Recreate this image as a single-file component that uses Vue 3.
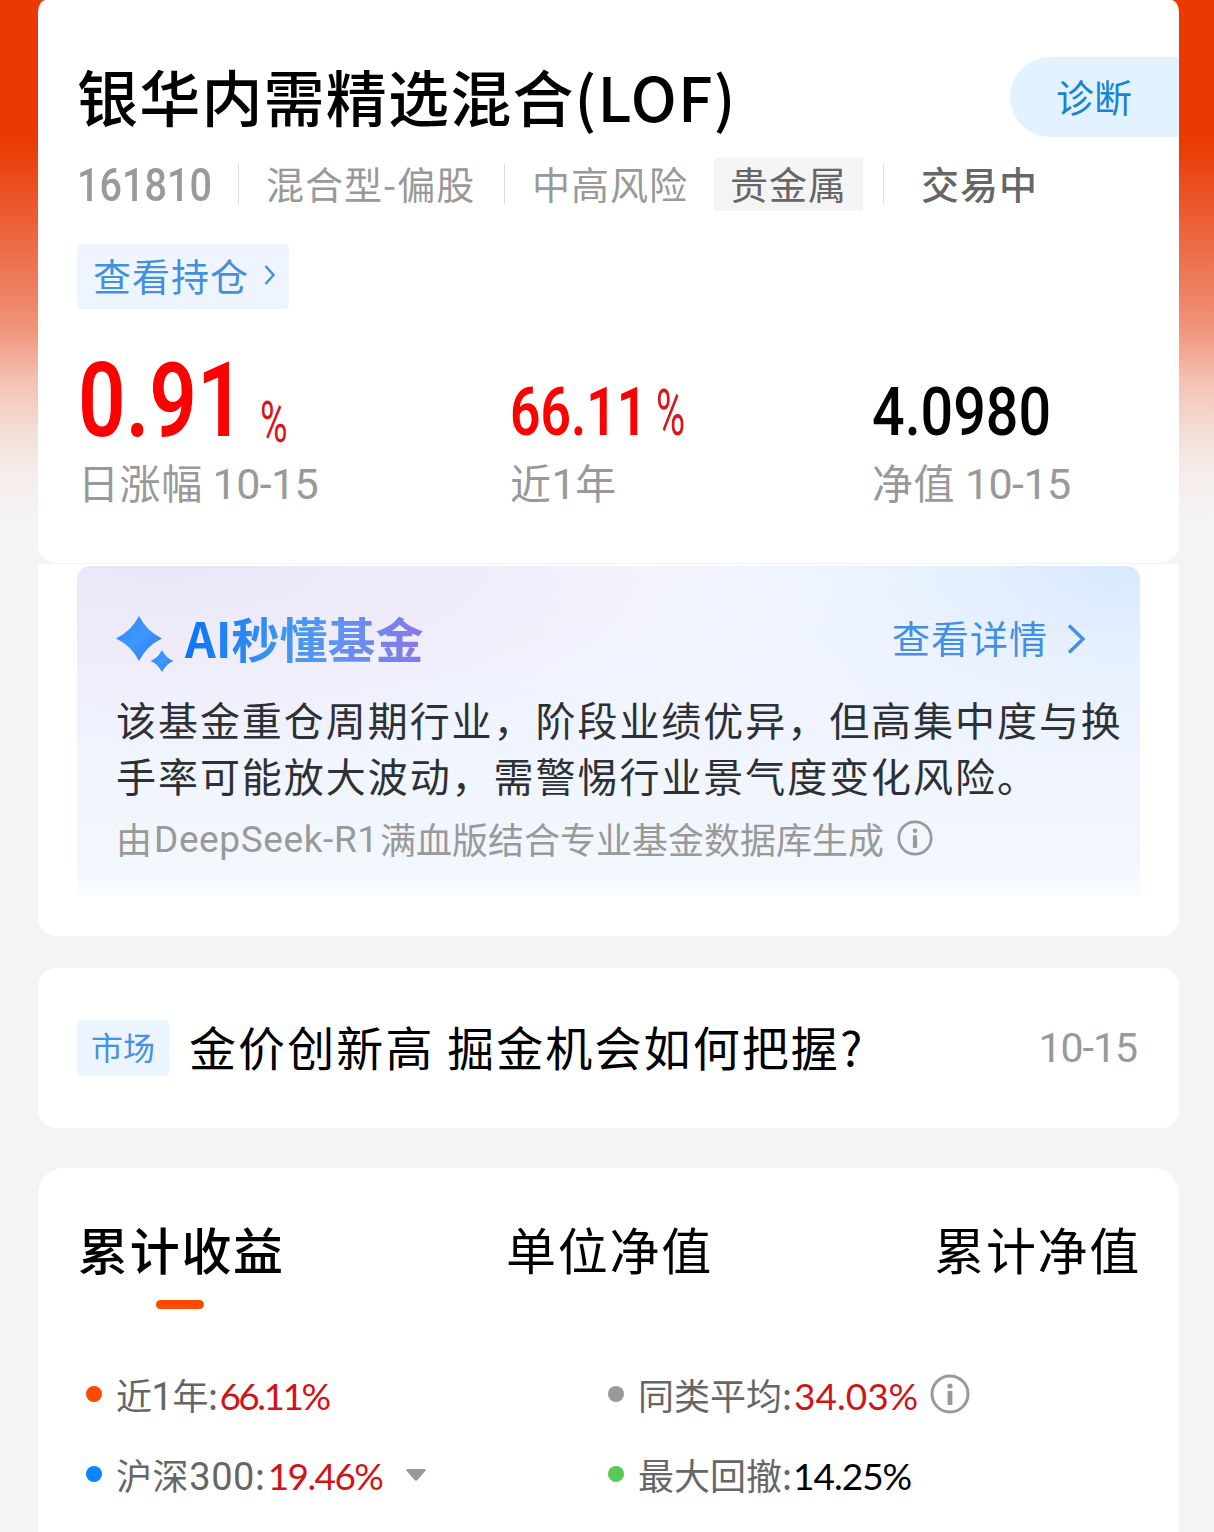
<template>
  <div class="fund-page">
    <section class="card summary">
      <div class="title-row">
        <h1>{{ fund.name }}</h1>
        <a class="diagnose">诊断</a>
      </div>

      <div class="meta-row">
        <span class="code">{{ fund.code }}</span>
        <span class="divider"></span>
        <span class="fund-type">{{ fund.type }}</span>
        <span class="divider"></span>
        <span class="risk">{{ fund.risk }}</span>
        <span class="sector">{{ fund.sector }}</span>
        <span class="divider"></span>
        <span class="status">{{ fund.status }}</span>
      </div>

      <a class="holdings">
        查看持仓
        <svg width="12" height="22" viewBox="0 0 12 22" fill="none">
          <path d="M1.5 2 L9.5 11 L1.5 20" stroke="currentColor" stroke-width="2.4" />
        </svg>
      </a>

      <div class="stats">
        <div class="stat stat-day">
          <div class="stat-value red"><b>0.91</b><i>%</i></div>
          <div class="stat-label">日涨幅 <span class="num">10-15</span></div>
        </div>
        <div class="stat stat-year">
          <div class="stat-value red"><b>66.11</b><i>%</i></div>
          <div class="stat-label">近<span class="num">1</span>年</div>
        </div>
        <div class="stat stat-net">
          <div class="stat-value"><b>4.0980</b></div>
          <div class="stat-label">净值 <span class="num">10-15</span></div>
        </div>
      </div>
    </section>

    <section class="card ai-card">
      <div class="ai-box">
        <div class="ai-head">
          <svg class="stars" width="58" height="56" viewBox="0 0 58 56">
            <defs>
              <linearGradient id="star" x1="0" y1="0" x2="1" y2="1">
                <stop offset="0" stop-color="#2f86ff" />
                <stop offset="0.5" stop-color="#3f97fc" />
                <stop offset="1" stop-color="#2b78f8" />
              </linearGradient>
            </defs>
            <path fill="url(#star)" d="M23 0 Q31 15.500 46 22.500 Q31 29.500 23 45 Q15 29.500 0 22.500 Q15 15.500 23 0Z" />
            <path fill="url(#star)" d="M46 34 Q50 42 57.500 45 Q50 48 46 56 Q42 48 34.500 45 Q42 42 46 34Z" />
          </svg>
          <span class="ai-title">AI秒懂基金</span>
          <a class="ai-more">
            <span>查看详情</span>
            <svg width="20" height="32" viewBox="0 0 20 32" fill="none">
              <path d="M2 2.5 L16 16 L2 29.5" stroke="currentColor" stroke-width="3.4" />
            </svg>
          </a>
        </div>
        <p class="ai-text">
          <span v-for="line in aiLines" :key="line">{{ line }}</span>
        </p>
        <div class="ai-source">
          <span>由</span><span class="model">DeepSeek-R1</span><span>满血版结合专业基金数据库生成</span>
          <svg class="info" width="36" height="36" viewBox="0 0 40 40" fill="none">
            <circle cx="20" cy="20" r="18" stroke="#999" stroke-width="3" />
            <circle cx="20" cy="12" r="2.5" fill="#999" />
            <rect x="17.7" y="17" width="4.6" height="14" fill="#999" />
          </svg>
        </div>
      </div>
    </section>

    <section class="card news">
      <span class="news-tag">市场</span>
      <span class="news-title">金价创新高 掘金机会如何把握?</span>
      <span class="news-date">10-15</span>
    </section>

    <section class="card chart">
      <nav class="tabs">
        <a
          v-for="(tab, index) in tabs"
          :key="tab"
          :class="{ active: index === activeTab }"
          @click="activeTab = index"
        >{{ tab }}</a>
      </nav>
      <div class="legend">
        <div v-for="item in legend" :key="item.label" class="legend-item" :class="item.key">
          <span class="dot"></span>
          <span class="legend-label">{{ item.label }}<span v-if="item.number" class="label-num">{{ item.number }}</span>{{ item.unit }}:</span>
          <span class="legend-value" :class="{ up: item.up }">{{ item.value }}</span>
          <svg v-if="item.info" class="legend-info" width="40" height="40" viewBox="0 0 40 40" fill="none">
            <circle cx="20" cy="20" r="18" stroke="#999" stroke-width="3" />
            <circle cx="20" cy="12" r="2.6" fill="#999" />
            <rect x="17.6" y="17" width="4.8" height="14" fill="#999" />
          </svg>
          <svg v-if="item.select" class="caret" width="20" height="12" viewBox="0 0 20 12">
            <path d="M1 0 H19 Q20.5 0.5 19.3 2 L11.5 11 Q10 12.5 8.5 11 L0.7 2 Q-0.5 0.5 1 0Z" fill="#999" />
          </svg>
        </div>
      </div>
    </section>
  </div>
</template>

<script setup>
import { ref } from 'vue'

const fund = {
  name: '银华内需精选混合(LOF)',
  code: '161810',
  type: '混合型-偏股',
  risk: '中高风险',
  sector: '贵金属',
  status: '交易中'
}

const aiLines = [
  '该基金重仓周期行业，阶段业绩优异，但高集中度与换',
  '手率可能放大波动，需警惕行业景气度变化风险。'
]

const tabs = ['累计收益', '单位净值', '累计净值']
const activeTab = ref(0)

const legend = [
  { key: 'year', label: '近', number: '1', unit: '年', value: '66.11%', up: true },
  { key: 'average', label: '同类平均', value: '34.03%', up: true, info: true },
  { key: 'hs300', label: '沪深', number: '300', value: '19.46%', up: true, select: true },
  { key: 'drawdown', label: '最大回撤', value: '14.25%' }
]
</script>

<style>
body {
  margin: 0;
  background: #f4f4f4;
}
</style>

<style scoped>
.fund-page {
  box-sizing: border-box;
  width: 1214px;
  height: 1532px;
  padding: 0 35px 0 38px;
  overflow: hidden;
  background: linear-gradient(
    to bottom,
    #ea3a02 0,
    #ea3a02 140px,
    #eb5529 200px,
    #ee8468 300px,
    #f0947a 328px,
    #f3c1b2 380px,
    #f3ddd6 430px,
    #f4ecea 470px,
    #f4f4f4 520px
  );
  font-family: "Noto Sans CJK SC", sans-serif;
  color: #000;
  white-space: nowrap;
}

.card {
  box-sizing: border-box;
  background: #fff;
}

.summary {
  height: 563px;
  padding: 57px 0 0 39px;
  border-radius: 8px 8px 20px 20px / 12px 12px 18px 18px;
}

.title-row {
  display: flex;
  justify-content: space-between;
  height: 80px;
  line-height: 77px;
}

.title-row h1 {
  margin: 0;
  font-size: 61px;
  font-weight: 500;
  letter-spacing: 1.2px;
}

.diagnose {
  box-sizing: border-box;
  width: 169px;
  padding-left: 46px;
  border-radius: 40px 0 0 40px;
  background: #e2f3ff;
  color: #1a84d4;
  font-size: 38px;
}

.meta-row {
  display: flex;
  align-items: center;
  height: 53px;
  margin-top: 21px;
  font-size: 38px;
  letter-spacing: 1px;
  line-height: 49px;
  color: #999;
}

.meta-row > span:not(.divider) {
  height: 53px;
}

.divider {
  width: 1px;
  height: 40px;
  margin-bottom: 2px;
  background: #ddd;
}

.meta-row .code {
  width: 161px;
  font-family: Roboto, sans-serif;
  font-size: 46px;
  font-weight: 500;
  letter-spacing: 0;
  line-height: 55px;
  transform: scaleX(0.86);
  transform-origin: left;
}

.fund-type {
  width: 238px;
  margin-left: 27px;
}

.risk {
  width: 182px;
  margin-left: 27px;
}

.sector {
  box-sizing: border-box;
  width: 149px;
  margin-right: 20px;
  padding-left: 16px;
  background: #f4f4f4;
  color: #666;
}

.status {
  margin-left: 37px;
  font-weight: 500;
  color: #666;
}

.holdings {
  box-sizing: border-box;
  display: flex;
  align-items: center;
  justify-content: space-between;
  width: 212px;
  height: 65px;
  margin-top: 33px;
  padding: 0 13px 4px 16px;
  border-radius: 4px;
  background: #eef5ff;
  color: #448fe0;
  font-size: 38px;
  letter-spacing: 1px;
  line-height: 61px;
}

.stats {
  display: flex;
  margin-top: 42px;
}

.stat-day {
  width: 433px;
}

.stat-year {
  width: 362px;
}

.stat-value {
  display: flex;
  align-items: baseline;
  height: 102px;
  font-family: Roboto, sans-serif;
  line-height: 124px;
}

.stat-value b {
  font-size: 66px;
  font-weight: 500;
  transform: scaleX(0.87);
  transform-origin: left;
}

.stat-value i {
  font-size: 64px;
  font-style: normal;
  transform: scaleX(0.62);
  transform-origin: left;
  color: #d9151b;
}

.stat-day .stat-value {
  line-height: 100px;
}

.stat-day b {
  margin-left: 1px;
  font-size: 103px;
  font-weight: 600;
  transform: scaleX(0.81);
}

.stat-day i {
  margin-left: -24px;
  font-size: 57px;
  transform: translateY(6px) scaleX(0.66);
}

.stat-year b {
  font-weight: 600;
  transform: scaleX(0.81);
}

.stat-year i {
  margin-left: -24px;
}

.red b {
  color: #f00;
}

.stat-label {
  height: 56px;
  padding-left: 1px;
  font-size: 41px;
  letter-spacing: 0.6px;
  line-height: 56px;
  color: #999;
}

.stat-year .stat-label,
.stat-net .stat-label {
  padding-left: 0;
}

.num {
  font-family: Roboto, sans-serif;
  font-size: 43px;
  letter-spacing: -0.6px;
}

.ai-card {
  height: 372px;
  margin-top: 1px;
  padding: 2px 39px 0;
  border-radius: 0 0 18px 18px;
}

.ai-box {
  box-sizing: border-box;
  height: 330px;
  padding: 45px 0 0 39px;
  border-radius: 14px 14px 0 0;
  background:
    linear-gradient(to bottom, rgba(255, 255, 255, 0) 90%, rgba(255, 255, 255, 0.55) 100%),
    radial-gradient(ellipse 480px 210px at 100% 0, #d7e8fe 0, rgba(230, 240, 254, 0.6) 55%, rgba(240, 246, 254, 0) 100%),
    radial-gradient(ellipse 640px 190px at 8% 0, #e9e6f8 0, #efecfa 45%, rgba(243, 246, 254, 0) 100%),
    linear-gradient(to bottom, #f5f8fe, #eff4fe 48%, #f3f8fe 100%);
}

.ai-head {
  display: flex;
  align-items: center;
  height: 56px;
  line-height: 56px;
}

.stars {
  flex: none;
  margin-top: 10px;
}

.ai-title {
  margin: -5px 0 0 11px;
  background: linear-gradient(100deg, #0873f7 0, #4397f0 45%, #6292ef 65%, #8a76e9 100%);
  background-clip: text;
  color: transparent;
  font-size: 48px;
  font-weight: 700;
}

.ai-more {
  display: flex;
  align-items: center;
  gap: 19px;
  margin-left: auto;
  margin-right: 53px;
  color: #428fe5;
  font-size: 38px;
  letter-spacing: 1px;
}

.ai-more span {
  margin-top: -4px;
}

.ai-text {
  margin: 24px 0 0;
  font-size: 40px;
  letter-spacing: 1.95px;
  line-height: 56px;
  color: #2d3034;
}

.ai-text span {
  display: block;
}

.ai-source {
  display: flex;
  align-items: center;
  height: 48px;
  margin-top: 11px;
  font-size: 36px;
  line-height: 48px;
  color: #999;
}

.ai-source .model {
  width: 224px;
  margin: 4px 2px 0;
  font-family: Roboto, sans-serif;
  font-size: 37px;
  letter-spacing: 0.6px;
}

.info {
  margin-left: 13px;
}

.news {
  display: flex;
  align-items: center;
  height: 160px;
  margin-top: 32px;
  padding: 0 42px 0 39px;
  border-radius: 18px;
}

.news-tag {
  width: 92px;
  height: 56px;
  border-radius: 4px;
  background: #ebf4ff;
  color: #4591e2;
  font-size: 32px;
  line-height: 52px;
  text-align: center;
}

.news-title {
  margin: -6px 0 0 20px;
  font-size: 47px;
  letter-spacing: 2.1px;
}

.news-date {
  margin-left: auto;
  font-family: Roboto, sans-serif;
  font-size: 41px;
  letter-spacing: -1px;
  color: #999;
}

.chart {
  height: 380px;
  margin-top: 40px;
  padding: 45px 38px 0 40px;
  border-radius: 26px 26px 0 0;
}

.tabs {
  display: flex;
  justify-content: space-between;
}

.tabs a {
  display: flex;
  flex-direction: column;
  align-items: center;
  height: 96px;
  font-size: 50px;
  letter-spacing: 1.7px;
  line-height: 70px;
}

.tabs .active {
  font-weight: 500;
}

.tabs .active::after {
  width: 48px;
  height: 9px;
  margin-top: 17px;
  margin-right: 2px;
  border-radius: 5px;
  background: #ff4a00;
  content: "";
}

.legend {
  display: grid;
  grid-template-columns: 522px 1fr;
  grid-auto-rows: 80px;
  margin: 46px 0 0 8px;
}

.legend-item {
  display: flex;
  align-items: center;
  font-size: 36px;
}

.dot {
  width: 16px;
  height: 16px;
  margin: 0 14px 3px 0;
  border-radius: 50%;
}

.year .dot {
  background: #ff4a00;
}

.average .dot {
  background: #999;
}

.hs300 .dot {
  background: #0a84ff;
}

.drawdown .dot {
  background: #57c957;
}

.legend-label {
  margin-top: -3px;
  color: #666;
}

.label-num {
  font-family: Roboto, sans-serif;
  font-size: 38px;
}

.legend-value {
  margin-left: 2px;
  font-family: Lato, sans-serif;
  font-size: 37px;
}

.year .legend-label {
  letter-spacing: -0.5px;
}

.year .legend-value {
  letter-spacing: -2.5px;
}

.hs300 .legend-label {
  letter-spacing: 0.6px;
}

.hs300 .legend-value {
  letter-spacing: -1.6px;
}

.drawdown .legend-value {
  margin-left: 1px;
  letter-spacing: -1px;
}

.up {
  color: #d01418;
}

.legend-info {
  margin: 0 0 3px 12px;
}

.caret {
  margin-left: 24px;
}
</style>
